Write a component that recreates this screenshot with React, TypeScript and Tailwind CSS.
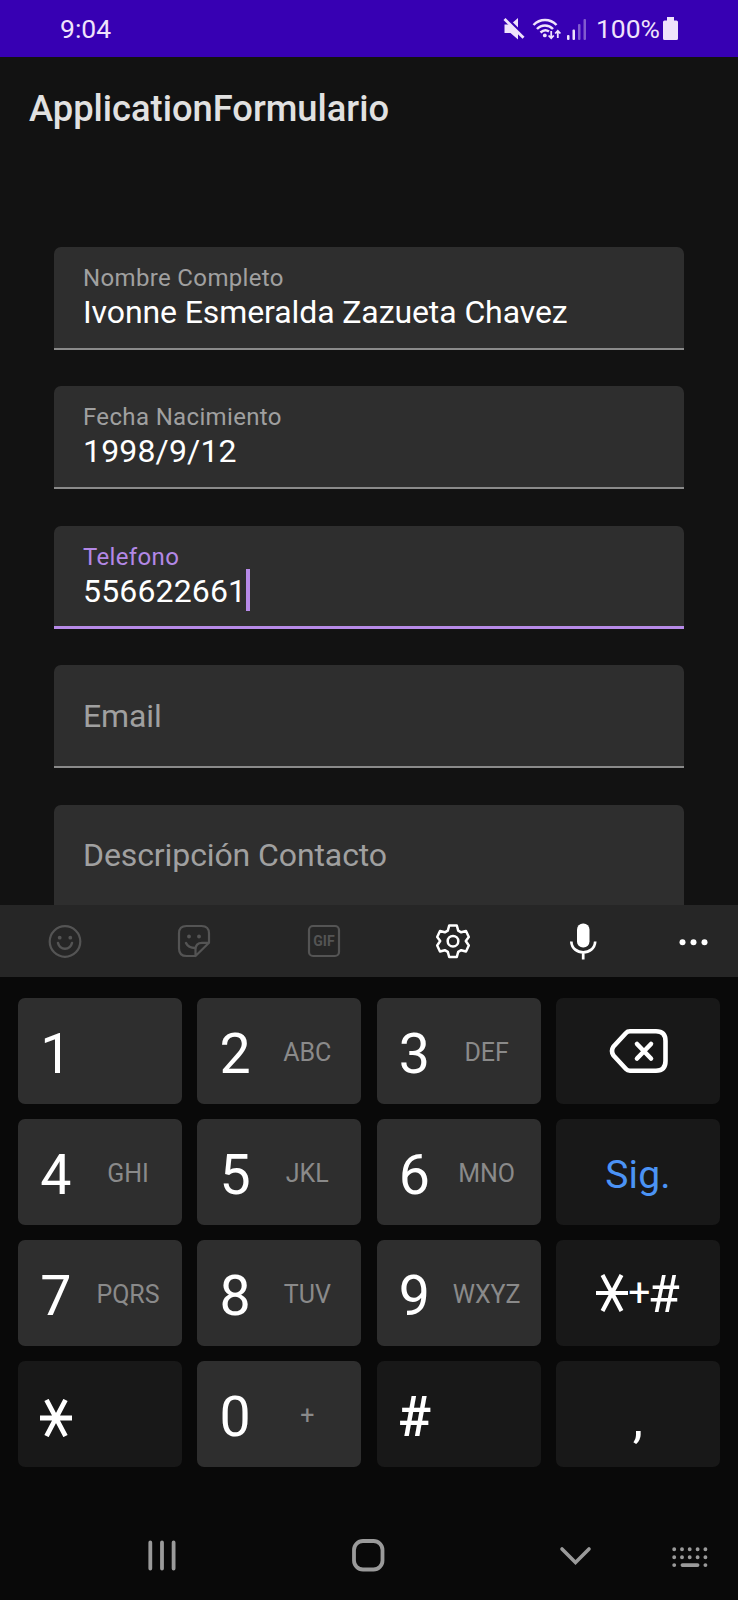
import type { ReactNode } from "react";

function StatusBar() {
  return (
    <header className="flex h-[57px] shrink-0 items-center bg-[#3700b3] pr-[60px] pl-[60px] text-[#efe3fb]">
      <span className="text-[26.500px] leading-[30px]">9:04</span>
      <div className="ml-auto flex items-center">
        <svg width="22" height="24" viewBox="0 0 22 24" className="mr-[7px]" fill="currentColor">
          <path d="M1.500 7.500H7.500L15 1V22.500L7.500 16H1.500Z" />
          <path d="M2 -0.500L22 19.500" stroke="#3700b3" strokeWidth="3" />
          <path d="M1.500 2L20.500 20.800" stroke="currentColor" strokeWidth="2.800" />
        </svg>
        <svg width="30" height="24" viewBox="0 0 30 24" className="mr-[5px]" fill="none" stroke="currentColor">
          <path d="M1.500 8C8 1.300 18 1.300 24.500 8" strokeWidth="2.500" />
          <path d="M5 12C9.500 7.200 16.500 7.200 21 12" strokeWidth="2.500" />
          <path d="M8.500 15.500C11.300 12.900 14.500 12.700 17 14.500" strokeWidth="2.500" />
          <circle cx="12.800" cy="18.400" r="1.900" fill="currentColor" stroke="none" />
          <path d="M19.200 14V21M16.600 18.500L19.200 21.200L21.800 18.500M25.800 21V14M23.200 16.500L25.800 13.800L28.400 16.500" strokeWidth="1.800" />
        </svg>
        <svg width="20" height="24" viewBox="0 0 20 24" className="mr-[9px]" fill="currentColor">
          <rect x="0" y="18" width="2.500" height="5" rx="1" />
          <rect x="5.500" y="12.500" width="2.500" height="10.500" rx="1" />
          <rect x="11" y="7" width="2.500" height="16" rx="1" opacity=".4" />
          <rect x="16.500" y="2" width="2.500" height="21" rx="1" opacity=".4" />
        </svg>
        <span className="mr-[3px] text-[26.500px] leading-[30px]">100%</span>
        <svg width="15" height="24" viewBox="0 0 15 24" fill="currentColor">
          <path d="M4 0H11V3.500H13.500Q15 3.500 15 5V21.500Q15 23 13.500 23H1.500Q0 23 0 21.500V5Q0 3.500 1.500 3.500H4Z" />
        </svg>
      </div>
    </header>
  );
}

type FieldProps = { label: string; value?: string; focused?: boolean; numeric?: boolean };

function Field({ label, value, focused, numeric }: FieldProps) {
  const line = focused ? "h-[3px] bg-[#b78ae8]" : "h-[2px] bg-[#8a8a8a]";
  return (
    <div className="mb-[36.500px] flex h-[103px] shrink-0 flex-col overflow-hidden rounded-t-[7px] bg-[#2e2e2e]">
      {value ? (
        <div className="flex grow flex-col pt-[15.300px] pl-[29px]">
          <span className={`text-[24px] leading-[32px] tracking-[0.35px] ${focused ? "text-[#b388e6]" : "text-[#a0a0a0]"}`}>
            {label}
          </span>
          <span className={`flex items-center text-[32px] leading-[37px] text-white ${numeric ? "tracking-[0.15px]" : "tracking-[-0.1px]"}`}>
            {value}
            {focused && <i className="-mt-[15px] -mb-[12px] h-[42px] w-[3.500px] bg-[#b78ae8]" />}
          </span>
        </div>
      ) : (
        <div className="flex grow items-center pl-[29px] text-[32px] tracking-[-0.1px] text-[#a0a0a0]">{label}</div>
      )}
      <div className={`shrink-0 ${line}`} />
    </div>
  );
}

function Slot({ children, className = "w-[129.500px] text-[#545454]" }: { children: ReactNode; className?: string }) {
  return (
    <div className={`flex shrink-0 items-center justify-center ${className}`}>
      <svg width="40" height="40" viewBox="0 0 40 40" fill="none" stroke="currentColor" strokeWidth="2.200" strokeLinecap="round" strokeLinejoin="round">
        {children}
      </svg>
    </div>
  );
}

function Toolbar() {
  return (
    <div className="flex h-[72px] shrink-0 bg-[#262626]">
      <Slot>
        <circle cx="20" cy="20.500" r="15.300" />
        <circle cx="14.700" cy="16.700" r="1.900" fill="currentColor" stroke="none" />
        <circle cx="25.300" cy="16.700" r="1.900" fill="currentColor" stroke="none" />
        <path d="M13 22C15 29.500 25 29.500 27 22" strokeWidth="2.500" />
      </Slot>
      <Slot>
        <path d="M21.500 35H12.500Q5 35 5 27.500V12.500Q5 5 12.500 5H27.500Q35 5 35 12.500V21.800L21.500 35V28.500Q21.500 21.800 28 21.800H35" />
        <circle cx="15" cy="15.500" r="1.900" fill="currentColor" stroke="none" />
        <circle cx="25" cy="15.500" r="1.900" fill="currentColor" stroke="none" />
        <path d="M12 22Q14.500 27 21 27" strokeWidth="2.500" />
      </Slot>
      <Slot>
        <rect x="5" y="5" width="30" height="30" rx="4" />
        <text x="20" y="25" textAnchor="middle" fontSize="14" fontWeight="700" fill="currentColor" stroke="none">
          GIF
        </text>
      </Slot>
      <Slot className="w-[129.500px] text-white">
        <path
          strokeWidth="2.500"
          d="M16.200 4.500H23.800L25.200 9.600L28.200 11.300L33 10L35.800 16L32.800 20L35.800 24.500L33 30.500L28.200 29.200L25.200 30.900L23.800 36H16.200L14.800 30.900L11.800 29.200L7 30.500L4.200 24.500L7.200 20L4.200 16L7 10L11.800 11.300L14.800 9.600Z"
        />
        <circle cx="20" cy="20.200" r="5.300" strokeWidth="2.500" />
      </Slot>
      <Slot className="w-[129.500px] text-white">
        <rect x="14" y="2.500" width="12.500" height="24" rx="6" fill="currentColor" stroke="none" />
        <path d="M8.300 20.500C9 35 31.500 35 32.200 20.500M20.200 31V38.500" strokeWidth="2.700" strokeLinecap="butt" />
      </Slot>
      <Slot className="grow text-white">
        <circle cx="9.500" cy="21.300" r="3" fill="currentColor" stroke="none" />
        <circle cx="20.500" cy="21.300" r="3" fill="currentColor" stroke="none" />
        <circle cx="31.500" cy="21.300" r="3" fill="currentColor" stroke="none" />
      </Slot>
    </div>
  );
}

function Key({ main, sub, dark }: { main: ReactNode; sub?: string; dark?: boolean }) {
  return (
    <button className={`flex items-center rounded-[7px] ${dark ? "bg-[#181818] font-medium" : "bg-[#2e2e2e]"}`}>
      <span className="flex w-[75.500px] justify-center pt-[7px] text-[55.500px] leading-[60px] text-white">{main}</span>
      <span className="w-[69px] pt-[3px] text-center text-[25px] leading-[30px] text-[#8a8a8a]">{sub}</span>
    </button>
  );
}

function SideKey({ children }: { children: ReactNode }) {
  return <button className="flex items-center justify-center rounded-[7px] bg-[#181818] text-white">{children}</button>;
}

function Star({ strokeWidth }: { strokeWidth: number }) {
  return (
    <svg width="32" height="38" viewBox="0 0 32 38" stroke="currentColor" strokeWidth={strokeWidth}>
      <path d="M0 19H32M6.500 1L25.500 37M25.500 1L6.500 37" />
    </svg>
  );
}

function Keypad() {
  return (
    <div className="grid h-[469px] shrink-0 grid-cols-4 grid-rows-4 gap-x-[15.300px] gap-y-[15px] px-[18px]">
      <Key main="1" />
      <Key main="2" sub="ABC" />
      <Key main="3" sub="DEF" />
      <SideKey>
        <svg width="60" height="46" viewBox="0 0 60 46" className="ml-[2px]" fill="none" stroke="currentColor" strokeWidth="4.600" strokeLinecap="round" strokeLinejoin="round">
          <path d="M21 3.300H47Q56.500 3.300 56.500 13V33Q56.500 42.700 47 42.700H21Q18.500 42.700 17 41L4.500 27.500Q1.500 23 4.500 18.500L17 5Q18.500 3.300 21 3.300Z" />
          <path d="M28 16L42 30.500M42 16L28 30.500" strokeWidth="4.600" />
        </svg>
      </SideKey>
      <Key main="4" sub="GHI" />
      <Key main="5" sub="JKL" />
      <Key main="6" sub="MNO" />
      <SideKey>
        <span className="pt-[5px] text-[39px] leading-[44px] tracking-[0.2px] text-[#4b93f5]">Sig.</span>
      </SideKey>
      <Key main="7" sub="PQRS" />
      <Key main="8" sub="TUV" />
      <Key main="9" sub="WXYZ" />
      <SideKey>
        <Star strokeWidth={4.2} />
        <span className="text-[39px] leading-[50px]">+</span>
        <span className="-ml-[2.500px] pt-[4px] text-[52px] leading-[56px]">#</span>
      </SideKey>
      <Key main={<Star strokeWidth={4.8} />} dark />
      <Key main="0" sub="+" />
      <Key main="#" dark />
      <SideKey>
        <span className="pt-[12px] text-[52px] leading-[60px]">,</span>
      </SideKey>
    </div>
  );
}

function NavBar() {
  return (
    <nav className="mt-[53px] flex h-[80px] shrink-0 pt-[16px] pl-[58.500px]">
      <Slot className="h-[40px] w-[207px] text-[#9a9a9a]">
        <path d="M8.300 6.500V32.500M20 6.500V32.500M31.600 6.500V32.500" strokeWidth="3.800" />
      </Slot>
      <Slot className="h-[40px] w-[207px] text-[#9a9a9a]">
        <rect x="5" y="5" width="28.500" height="28.500" rx="9" strokeWidth="3.800" />
      </Slot>
      <Slot className="h-[40px] w-[207px] text-[#9a9a9a]">
        <path d="M6 13L19.500 26.500L33 13" strokeWidth="3.600" strokeLinejoin="miter" />
      </Slot>
      <Slot className="-ml-[10px] h-[40px] w-[40px] text-[#9a9a9a]">
        <path d="M4.200 13.300h.010M12 13.300h.010M19.700 13.300h.010M27.600 13.300h.010M35.400 13.300h.010M4.200 21.300h.010M12 21.300h.010M19.700 21.300h.010M27.600 21.300h.010M35.400 21.300h.010M4.200 29.100h.010M12.500 29.100H27.500M35.400 29.100h.010" strokeWidth="3.900" />
      </Slot>
    </nav>
  );
}

export default function App() {
  return (
    <div className="flex h-[1600px] w-[738px] flex-col overflow-hidden bg-[#090909] font-['Roboto',sans-serif]">
      <StatusBar />
      <main className="flex h-[848px] shrink-0 flex-col overflow-hidden bg-[#121212]">
        <h1 className="shrink-0 pt-[31px] pl-[29px] text-[36.300px] leading-[42px] font-medium text-[#e1e1e1]">ApplicationFormulario</h1>
        <div className="mt-[116.700px] flex flex-col px-[54px]">
          <Field label="Nombre Completo" value="Ivonne Esmeralda Zazueta Chavez" />
          <Field label="Fecha Nacimiento" value="1998/9/12" numeric />
          <Field label="Telefono" value="556622661" numeric focused />
          <Field label="Email" />
          <Field label="Descripción Contacto" />
        </div>
      </main>
      <Toolbar />
      <div className="h-[21px] shrink-0" />
      <Keypad />
      <NavBar />
    </div>
  );
}
